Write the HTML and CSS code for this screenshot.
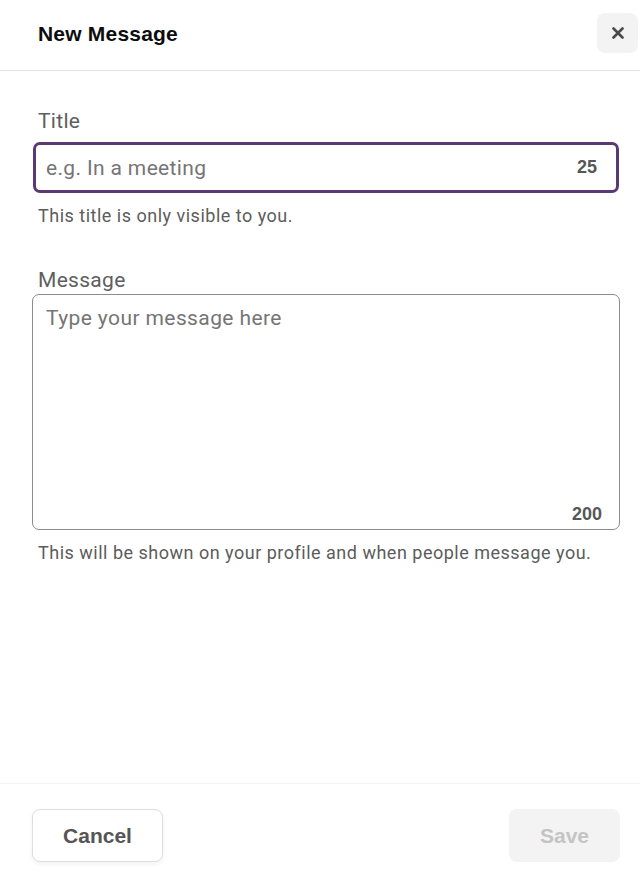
FILE: index.html
```html
<!DOCTYPE html>
<html lang="en">
<head>
    <meta charset="UTF-8">
    <meta name="viewport" content="width=device-width, initial-scale=1.0">
    <title>New Message</title>
    <link rel="stylesheet" href="styles.css">
</head>
<body>
    <div class="modal">
        <header class="modal-header">
            <h1 class="modal-title">New Message</h1>
            <button class="close-btn" aria-label="Close">
                <svg width="12" height="12" viewBox="0 0 12 12">
                    <path d="M1.5 1.5L10.5 10.5M10.5 1.5L1.5 10.5" stroke="#4a4a4a" stroke-width="2.6" stroke-linecap="round"/>
                </svg>
            </button>
        </header>

        <main class="modal-body">
            <label class="field-label" for="title">Title</label>
            <div class="input-box focused">
                <input type="text" id="title" placeholder="e.g. In a meeting" maxlength="25">
                <span class="counter">25</span>
            </div>
            <p class="hint">This title is only visible to you.</p>

            <label class="field-label message-label" for="message">Message</label>
            <div class="textarea-box">
                <textarea id="message" placeholder="Type your message here" maxlength="200"></textarea>
                <span class="counter">200</span>
            </div>
            <p class="hint">This will be shown on your profile and when people message you.</p>
        </main>

        <footer class="modal-footer">
            <button class="btn btn-cancel">Cancel</button>
            <button class="btn btn-save" disabled>Save</button>
        </footer>
    </div>
</body>
</html>
```

FILE: styles.css
```css
html, body {
    margin: 0;
    height: 100%;
}
body {
    font-family: Roboto, "Liberation Sans", sans-serif;
    background-color: #fff;
    color: #111;
}
.modal {
    display: flex;
    flex-direction: column;
    height: 100vh;
}
.modal-header {
    display: flex;
    align-items: flex-start;
    justify-content: space-between;
    height: 71px;
    box-sizing: border-box;
    padding: 13px 2px 0 38px;
    border-bottom: 1px solid #e2e2e2;
}
.modal-title {
    margin: 8px 0 0;
    font-family: "Liberation Sans", Arial, sans-serif;
    font-size: 21px;
    font-weight: bold;
    line-height: 26px;
    letter-spacing: 0.2px;
    color: #0d0d0d;
}
.close-btn {
    width: 41px;
    height: 40px;
    border: none;
    border-radius: 8px;
    background-color: #f3f3f3;
    display: flex;
    align-items: center;
    justify-content: center;
    padding: 0;
    cursor: pointer;
}
.modal-body {
    flex: 1;
    padding: 38px 20px 0 32px;
}
.field-label {
    display: block;
    margin: 0 0 9px 6px;
    font-size: 21px;
    line-height: 24px;
    letter-spacing: 0.3px;
    color: #5e5e5e;
}
.message-label {
    margin-top: 42px;
    margin-bottom: 2px;
}
.input-box {
    display: flex;
    align-items: center;
    height: 51px;
    box-sizing: border-box;
    margin-left: 1px;
    margin-right: 1px;
    padding: 0 19px 0 10px;
    border: 3px solid #5b3a74;
    border-radius: 7px;
}
.input-box input {
    flex: 1;
    border: none;
    outline: none;
    padding: 0;
    font-family: Roboto, "Liberation Sans", sans-serif;
    font-size: 21px;
    letter-spacing: 0.35px;
    color: #333;
    background: transparent;
}
.counter {
    font-family: "Liberation Sans", Arial, sans-serif;
    font-size: 18px;
    font-weight: bold;
    color: #575757;
}
input::placeholder,
textarea::placeholder {
    color: #757575;
}
.textarea-box {
    display: flex;
    flex-direction: column;
    height: 236px;
    box-sizing: border-box;
    padding: 11px 17px 4px 13px;
    border: 1px solid #8c8c8c;
    border-radius: 7px;
}
.textarea-box textarea {
    flex: 1;
    border: none;
    outline: none;
    resize: none;
    padding: 0;
    font-family: Roboto, "Liberation Sans", sans-serif;
    font-size: 21px;
    line-height: 24px;
    letter-spacing: 0.4px;
    color: #333;
}
.textarea-box .counter {
    align-self: flex-end;
    line-height: 22px;
}
.hint {
    margin: 13px 0 0 6px;
    font-size: 18px;
    line-height: 20px;
    letter-spacing: 0.5px;
    color: #5c5c5c;
}
.modal-footer {
    display: flex;
    justify-content: space-between;
    padding: 25px 20px 16px 32px;
    border-top: 1px solid #f3f3f3;
}
.btn {
    height: 53px;
    border-radius: 8px;
    font-family: "Liberation Sans", Arial, sans-serif;
    font-size: 21px;
    font-weight: bold;
    cursor: pointer;
}
.btn-cancel {
    width: 131px;
    background-color: #fff;
    border: 1px solid #dedede;
    color: #555;
    box-shadow: 0 2px 5px rgba(0, 0, 0, 0.06);
}
.btn-save {
    width: 111px;
    background-color: #f3f3f3;
    border: none;
    color: #c4c4c4;
    cursor: default;
}
```
